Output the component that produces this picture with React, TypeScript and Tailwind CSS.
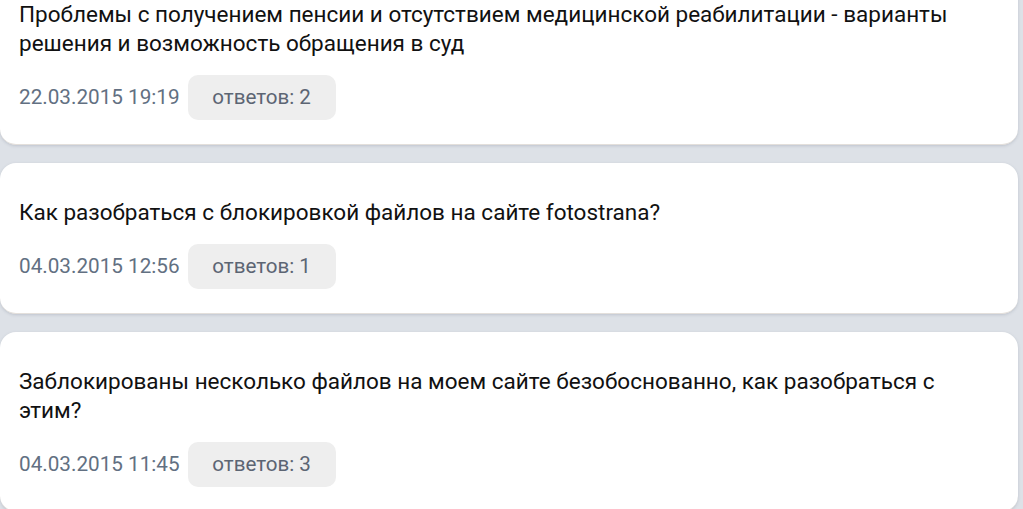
import React from "react";

type Question = {
  title: string;
  date: string;
  answers: number;
};

const QUESTIONS: Question[] = [
  {
    title:
      "Проблемы с получением пенсии и отсутствием медицинской реабилитации - варианты решения и возможность обращения в суд",
    date: "22.03.2015 19:19",
    answers: 2,
  },
  {
    title: "Как разобраться с блокировкой файлов на сайте fotostrana?",
    date: "04.03.2015 12:56",
    answers: 1,
  },
  {
    title:
      "Заблокированы несколько файлов на моем сайте безобоснованно, как разобраться с этим?",
    date: "04.03.2015 11:45",
    answers: 3,
  },
];

function QuestionCard({ q }: { q: Question }) {
  return (
    <div className="bg-white rounded-[16px] border-b border-[#e3dfdb] shadow-[0_1px_3px_rgba(100,110,130,0.25)] pt-[35px] pb-[24px] pl-[19px] pr-[19px]">
      <p className="text-[22.5px] leading-[29px] text-[#111]">{q.title}</p>
      <div className="flex items-center gap-[8px] mt-[17px]">
        <span className="text-[20.7px] text-[#627082]">{q.date}</span>
        <span className="h-[45px] w-[148px] flex items-center justify-center rounded-[10px] bg-[#eeeeee] text-[20.6px] text-[#5c6573]">
          ответов: {q.answers}
        </span>
      </div>
    </div>
  );
}

export default function App() {
  return (
    <div
      className="min-h-screen bg-[#dde1e7] overflow-hidden"
      style={{ fontFamily: "Roboto, 'Liberation Sans', sans-serif" }}
    >
      <div className="-mt-[35px] w-[1018px] flex flex-col gap-[18px]">
        {QUESTIONS.map((q) => (
          <QuestionCard key={q.date} q={q} />
        ))}
      </div>
    </div>
  );
}
